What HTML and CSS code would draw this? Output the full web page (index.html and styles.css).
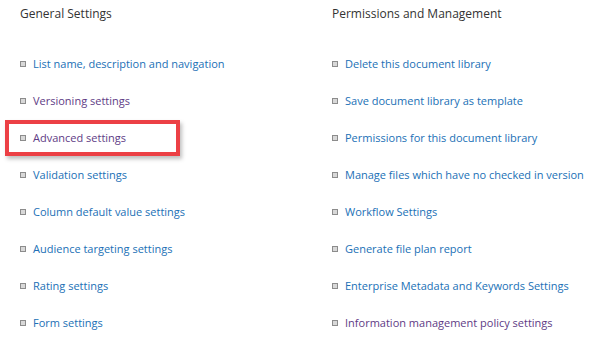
FILE: index.html
```html
<!DOCTYPE html>
<html>
<head>
<meta charset="utf-8">
<link rel="stylesheet" href="styles.css">
</head>
<body>
<div class="page">
  <section class="col col-left">
    <h2 class="heading">General Settings</h2>
    <ul class="links">
      <li><a class="link">List name, description and navigation</a></li>
      <li><a class="link visited">Versioning settings</a></li>
      <li class="highlight"><a class="link visited">Advanced settings</a></li>
      <li><a class="link">Validation settings</a></li>
      <li><a class="link">Column default value settings</a></li>
      <li><a class="link">Audience targeting settings</a></li>
      <li><a class="link">Rating settings</a></li>
      <li><a class="link">Form settings</a></li>
    </ul>
  </section>
  <section class="col col-right">
    <h2 class="heading">Permissions and Management</h2>
    <ul class="links">
      <li><a class="link">Delete this document library</a></li>
      <li><a class="link">Save document library as template</a></li>
      <li><a class="link">Permissions for this document library</a></li>
      <li><a class="link">Manage files which have no checked in version</a></li>
      <li><a class="link">Workflow Settings</a></li>
      <li><a class="link">Generate file plan report</a></li>
      <li><a class="link">Enterprise Metadata and Keywords Settings</a></li>
      <li><a class="link visited">Information management policy settings</a></li>
    </ul>
  </section>
</div>
</body>
</html>
```

FILE: styles.css
```css
html, body {
  margin: 0;
  padding: 0;
  background: #ffffff;
}
body {
  font-family: "Open Sans", "Noto Sans", sans-serif;
  width: 592px;
  height: 342px;
  overflow: hidden;
}
.page {
  display: flex;
  padding: 0 0 0 20px;
}
.col-left {
  width: 312px;
}
.col-right {
  flex: 1;
}
.heading {
  margin: 0;
  padding-top: 4px;
  height: 41px;
  font-size: 12px;
  font-weight: normal;
  color: #333333;
  line-height: 20px;
}
.links {
  list-style: none;
  margin: 0;
  padding: 0;
  display: flex;
  flex-direction: column;
}
.links li {
  position: relative;
  height: 37px;
  display: flex;
  align-items: center;
  gap: 7px;
  font-size: 11px;
  white-space: nowrap;
}
.links li::before {
  content: "";
  width: 4px;
  height: 4px;
  border: 1px solid #8c8c8c;
  background: #d8d8d8;
  flex: none;
}
.link {
  color: #2170b6;
  text-decoration: none;
}
.link.visited {
  color: #5e3b85;
}
.highlight::after {
  content: "";
  position: absolute;
  left: -15px;
  top: 1px;
  width: 167px;
  height: 28px;
  border: 4px solid #ec4045;
  box-shadow: 2px 3px 4px rgba(0,0,0,0.25);
}
```
